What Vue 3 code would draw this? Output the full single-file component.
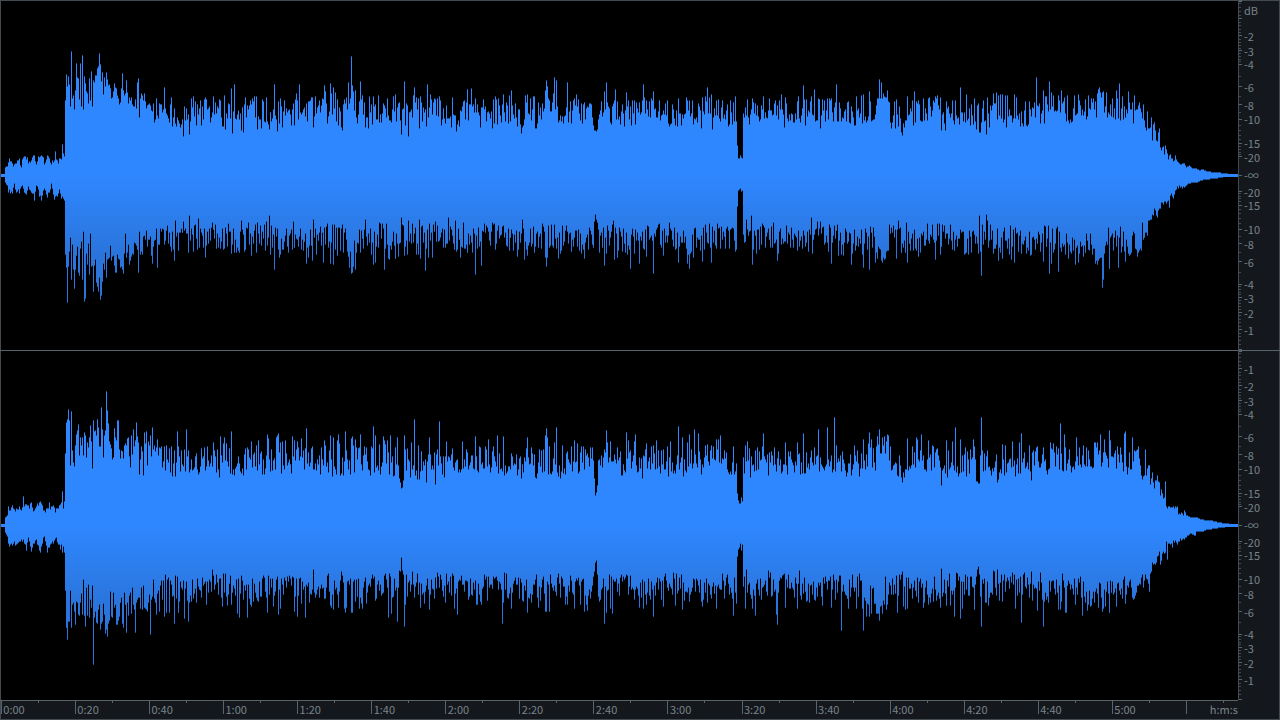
<script setup>
const COLS = 1238
const MID = 175

const LEFT_UP = `1 1 4 1 5 8 7 9 8 13 9 17 11 14 13 9 15 12 17 15 19 17 21 8 22 16 25 19 27 18 28 12 32 18 34 20 36 11 38 19 41 20 43 18 44 11 47 20 49 17 51 11 52 15 54 15 55 24 56 16 58 12 59 17 61 16 62 31 63 22 64 19 65 75 66 101 67 89 68 99 69 91 70 69 71 124 72 77 73 80 74 66 75 85 76 112 77 98 78 97 79 76 80 112 81 69 82 120 83 66 84 99 85 92 86 84 87 82 88 72 89 97 90 75 91 104 92 69 93 95 94 93 95 100 96 100 97 107 98 109 99 122 100 111 101 94 102 103 103 81 104 98 105 89 106 103 107 96 108 90 109 91 110 87 111 77 113 84 114 92 116 87 118 77 119 71 120 73 122 102 123 85 124 80 125 82 126 95 127 83 128 72 129 78 131 78 132 71 134 69 135 76 136 67 137 93 138 97 139 58 140 77 141 82 143 75 144 82 145 74 146 67 149 72 151 65 153 72 154 53 158 57 161 71 164 88 165 67 166 62 167 60 168 57 170 71 171 78 172 49 175 52 180 48 183 39 186 67 189 41 191 77 192 68 196 50 197 71 201 50 207 66 209 69 213 79 219 76 220 75 224 80 225 46 231 87 232 42 234 91 241 45 243 43 245 78 252 77 256 79 257 46 261 47 263 74 269 46 274 91 277 44 280 77 284 75 296 82 299 91 306 72 310 75 313 48 318 70 321 70 324 90 325 84 327 52 330 92 331 82 333 88 335 83 337 76 341 48 342 45 344 76 346 78 348 93 350 77 351 119 352 90 353 84 355 85 356 58 360 94 362 80 365 48 368 47 369 79 372 51 373 79 375 71 378 80 387 77 393 79 395 81 400 55 401 41 404 94 406 72 408 39 413 80 414 88 416 78 418 77 419 47 420 79 426 49 427 91 430 81 439 79 440 75 445 52 452 78 456 44 467 86 471 87 475 77 480 48 481 68 492 47 493 76 495 79 498 77 503 81 509 80 511 85 520 51 521 42 522 48 523 50 525 80 527 81 535 47 536 47 537 52 542 72 545 85 546 95 547 89 553 82 554 98 555 66 556 95 567 93 570 74 574 77 576 81 593 50 594 45 595 45 596 44 597 46 604 84 606 93 614 75 615 86 626 83 634 75 639 73 643 91 644 78 646 75 653 84 667 75 669 49 678 77 686 78 687 75 689 75 701 47 707 88 711 81 712 46 716 75 718 76 730 75 735 79 737 30 738 17 739 17 740 20 741 18 742 17 743 62 747 76 752 77 774 72 781 81 784 48 785 78 798 79 803 90 805 50 814 86 818 77 820 47 822 76 827 77 830 75 836 91 856 79 861 80 863 81 869 84 877 77 878 77 879 96 880 77 881 93 882 77 883 82 884 79 885 78 886 78 887 85 888 74 891 47 894 74 895 47 896 76 901 43 902 40 904 48 907 79 912 75 914 84 918 75 928 77 937 80 941 45 945 45 946 74 955 75 960 88 966 81 974 77 976 46 979 43 980 43 986 41 989 48 993 82 996 83 998 80 1000 81 1002 81 1005 80 1006 48 1007 80 1014 81 1016 78 1029 74 1036 98 1039 72 1040 52 1043 85 1044 52 1046 79 1049 94 1061 85 1067 80 1069 52 1074 80 1078 81 1088 80 1093 77 1097 82 1098 86 1099 88 1102 83 1103 84 1115 56 1116 85 1117 77 1119 92 1122 79 1128 84 1130 66 1134 80 1136 66 1138 70 1139 73 1140 67 1142 57 1143 71 1144 55 1146 45 1147 64 1148 47 1150 48 1151 58 1152 35 1153 51 1154 53 1156 35 1157 34 1158 43 1159 47 1160 28 1161 25 1163 29 1164 21 1165 30 1168 16 1170 21 1172 17 1174 15 1175 20 1178 13 1180 11 1184 12 1186 8 1189 10 1192 7 1196 7 1199 5 1202 6 1206 4 1215 3 1225 2 1230 1`

const LEFT_DOWN = `1 1 4 1 5 8 7 11 8 18 9 15 10 19 12 19 14 9 16 18 18 15 19 19 21 12 23 14 26 20 28 12 31 18 33 19 34 26 36 11 39 22 41 26 44 14 46 20 47 23 49 18 51 9 54 25 55 22 57 22 59 15 61 24 64 26 65 80 66 93 67 128 68 92 69 77 70 63 71 105 72 70 73 95 74 114 75 95 76 81 77 72 78 98 79 101 80 74 81 67 82 105 83 57 84 127 85 124 86 79 87 90 88 69 89 100 90 59 91 92 92 91 93 117 94 91 95 85 96 108 97 112 98 117 99 103 100 125 101 121 102 107 103 89 104 95 105 78 106 103 107 85 109 83 110 71 111 86 113 81 115 98 116 98 117 80 119 85 120 93 122 95 123 99 124 79 125 59 126 83 128 70 129 90 131 82 133 80 134 68 136 71 137 75 138 98 139 57 140 80 142 80 143 62 145 65 146 56 147 72 148 65 150 62 151 81 152 89 154 66 157 93 160 54 165 66 167 51 171 77 172 57 174 86 175 46 178 76 182 58 183 47 188 78 189 41 195 50 198 44 199 73 205 83 212 48 219 63 224 74 228 49 236 78 239 78 241 46 245 75 248 48 251 81 256 78 257 48 265 76 266 47 269 41 270 80 274 95 278 75 279 83 280 80 283 75 293 47 294 73 306 89 308 83 312 86 313 45 316 80 323 88 330 89 333 90 334 50 337 81 340 76 342 50 347 77 348 82 349 93 350 77 351 99 352 98 353 92 354 66 355 95 360 78 365 45 371 80 373 90 375 88 384 95 388 84 389 85 395 84 398 82 401 43 402 50 403 51 404 81 407 80 408 46 412 49 416 80 418 80 419 45 420 84 425 96 428 83 432 83 435 47 443 73 448 43 455 46 457 75 460 83 463 48 472 78 475 100 481 91 492 48 495 75 509 76 517 82 522 45 524 85 527 81 534 78 545 83 546 92 547 83 558 84 560 79 566 51 571 77 584 84 593 73 594 47 595 40 596 45 597 48 598 55 599 78 604 91 606 79 613 46 614 85 617 83 630 94 639 89 640 62 643 74 646 82 653 99 663 81 669 48 675 75 678 88 686 74 687 89 688 80 689 94 690 79 691 77 693 83 700 76 702 87 711 88 717 49 720 74 736 75 737 32 738 16 739 15 740 14 741 17 742 16 743 60 746 45 751 41 752 90 756 79 762 49 765 73 777 86 778 79 790 73 811 43 812 79 817 47 820 47 828 77 831 89 838 81 841 80 843 81 851 90 862 80 863 93 869 95 875 88 876 78 877 84 878 72 879 74 880 75 881 86 882 88 883 83 884 85 885 84 886 77 887 76 888 76 896 84 898 46 901 78 905 78 906 48 907 88 910 76 918 82 927 49 935 85 940 80 954 76 964 80 965 79 979 41 981 101 982 50 986 40 987 46 993 79 998 86 1000 78 1002 84 1009 80 1011 85 1014 88 1021 79 1030 81 1031 80 1043 87 1049 99 1051 89 1058 97 1065 80 1068 84 1075 90 1078 88 1083 82 1092 80 1095 89 1096 86 1097 90 1098 86 1099 84 1100 83 1101 83 1102 113 1103 105 1104 79 1109 94 1118 93 1120 52 1125 87 1136 75 1137 82 1138 78 1139 76 1141 76 1142 48 1143 65 1145 58 1147 61 1148 46 1151 45 1153 41 1154 34 1157 43 1159 34 1162 28 1166 29 1168 26 1169 33 1170 21 1173 24 1176 15 1180 13 1184 13 1188 9 1192 8 1196 8 1200 6 1205 5 1214 4 1220 3 1225 2 1230 1`

const RIGHT_UP = `1 1 4 1 5 8 7 10 8 19 10 15 12 20 14 16 16 17 19 19 21 15 22 18 23 29 24 19 27 20 29 17 31 23 33 14 35 17 37 22 41 22 44 15 47 17 48 17 49 23 50 16 53 20 55 13 57 17 60 21 61 23 62 34 63 17 64 24 65 72 66 103 67 106 68 116 69 105 70 60 71 114 72 75 73 63 74 59 75 80 76 91 77 95 78 101 79 70 80 88 81 80 82 88 83 70 84 93 85 90 86 68 87 83 88 78 89 88 90 100 91 84 92 57 93 105 94 94 95 95 96 90 97 106 98 98 99 79 100 79 101 118 102 96 103 68 104 90 105 95 106 134 107 115 108 102 109 84 110 81 111 77 112 66 113 68 114 97 115 88 116 85 117 105 118 105 119 76 120 67 121 75 122 74 123 67 124 80 126 80 127 87 128 88 129 69 130 58 131 90 132 71 133 96 134 79 135 85 136 103 137 89 138 83 139 51 141 79 142 74 143 50 144 93 145 82 146 94 147 60 148 84 149 80 150 90 151 69 152 98 153 76 155 74 156 78 157 86 158 70 161 79 164 79 166 80 167 66 169 77 171 79 173 62 177 94 178 79 181 75 184 76 186 96 189 53 198 51 199 53 204 78 207 79 213 83 217 76 220 89 223 82 224 88 226 82 229 77 231 94 232 51 240 54 243 50 247 78 251 84 256 80 258 85 262 51 264 51 267 91 268 87 271 76 276 88 277 90 278 92 280 83 282 84 285 85 292 89 294 85 297 84 301 87 303 75 306 97 311 77 312 79 313 56 320 51 321 78 324 85 325 80 328 53 330 90 333 88 337 85 338 91 339 82 341 52 343 50 345 94 351 87 352 89 353 80 355 86 360 91 370 50 371 79 373 99 375 90 379 81 383 89 384 85 385 81 387 85 390 90 395 78 397 88 399 47 400 43 401 37 402 38 403 45 404 90 405 76 410 48 411 83 414 106 415 50 417 46 418 80 419 46 421 74 426 43 429 88 435 41 439 104 444 48 446 84 452 77 462 84 475 89 478 53 488 86 493 79 497 90 498 52 503 89 521 47 527 88 535 48 536 47 537 52 545 90 546 97 547 88 549 79 550 52 554 83 556 98 560 47 562 80 571 79 574 85 577 82 581 79 585 76 594 47 595 30 596 33 597 40 598 65 604 76 606 95 607 83 610 84 617 78 626 93 628 85 634 84 635 91 642 47 646 82 653 80 656 85 667 79 670 84 673 52 678 99 682 88 687 83 689 91 694 96 698 92 701 51 705 80 707 81 711 80 716 86 718 86 720 90 733 79 737 32 738 25 739 22 740 22 741 28 742 24 743 68 745 80 747 84 750 48 763 92 768 50 774 78 785 83 797 83 802 52 803 92 818 96 827 98 834 108 836 80 854 80 859 49 863 86 868 82 869 93 871 86 876 79 877 89 878 81 879 96 880 72 881 72 882 88 883 80 884 89 885 72 886 84 887 91 888 90 890 79 901 48 902 43 904 48 907 87 912 79 916 88 917 86 921 91 928 85 932 80 941 40 946 85 947 48 952 84 955 98 960 86 965 78 973 86 974 79 976 44 977 44 978 42 979 42 981 108 990 55 991 50 997 43 998 46 999 53 1002 81 1005 80 1012 84 1019 83 1020 52 1021 92 1029 80 1031 45 1036 78 1043 78 1047 51 1050 83 1056 79 1060 102 1062 55 1064 91 1065 78 1076 88 1079 78 1094 83 1095 83 1096 78 1097 83 1100 91 1104 86 1109 95 1110 85 1117 79 1124 92 1125 94 1127 51 1132 88 1134 75 1138 79 1140 60 1141 50 1142 46 1144 50 1145 76 1146 50 1147 57 1149 60 1150 41 1152 53 1154 37 1155 45 1157 50 1159 43 1160 30 1161 36 1163 27 1164 28 1165 44 1166 19 1170 18 1174 17 1177 19 1178 11 1181 13 1183 10 1184 15 1186 10 1190 8 1196 8 1200 6 1206 5 1210 5 1218 3 1225 2 1232 1`

const RIGHT_DOWN = `1 1 4 1 5 8 7 12 8 19 9 22 12 21 14 17 15 21 18 18 21 15 24 19 26 26 28 13 31 27 33 19 36 15 39 26 40 28 43 13 45 17 47 28 50 20 53 19 55 14 58 20 60 25 61 20 62 28 63 22 64 28 65 66 66 103 67 115 68 97 69 97 70 66 71 103 72 80 73 78 74 87 75 100 76 77 77 78 78 90 79 91 80 78 81 69 82 90 83 55 84 91 85 102 86 63 87 91 88 60 89 93 90 75 91 83 92 61 93 140 94 93 95 87 96 98 97 99 98 85 99 80 100 105 101 99 102 97 103 79 104 90 105 109 106 105 107 112 108 99 109 96 110 67 111 92 112 93 113 68 114 83 115 80 116 100 117 100 118 96 119 92 120 78 121 73 122 99 123 103 124 68 125 80 126 108 127 78 128 91 129 71 130 68 131 89 132 63 133 80 134 85 135 108 136 78 139 73 140 84 141 63 142 85 143 61 144 83 146 85 147 87 148 78 149 70 150 110 151 75 152 72 155 78 156 90 158 66 159 87 160 61 164 92 166 88 168 53 169 88 174 99 178 88 180 57 184 94 188 97 197 54 202 53 206 80 212 45 216 50 222 82 227 81 231 80 237 89 239 93 241 51 247 93 251 82 264 53 267 88 273 82 278 90 280 84 284 53 294 87 297 92 300 53 305 93 313 45 319 73 327 51 330 81 331 83 333 85 338 83 341 47 344 84 345 88 346 83 351 88 352 88 359 84 362 84 365 53 372 50 388 93 391 89 397 97 399 46 400 47 401 33 402 46 403 50 404 102 405 80 406 50 412 47 417 49 420 83 429 85 435 53 437 48 438 52 440 50 445 78 453 51 454 84 457 90 476 80 481 80 484 50 502 99 503 78 511 84 527 88 536 50 538 83 545 87 546 87 549 87 550 50 565 80 567 80 574 84 580 80 584 87 587 86 593 52 594 47 595 38 596 36 597 50 604 99 606 88 610 84 612 89 639 83 643 84 646 80 653 92 663 82 673 48 675 81 682 85 702 82 716 84 733 91 736 79 737 32 738 25 739 23 740 19 741 26 742 20 743 62 745 84 746 45 752 84 755 91 768 46 770 48 776 90 777 100 785 83 797 84 799 46 822 81 831 83 841 106 848 84 856 84 859 49 862 84 863 106 865 76 866 92 867 79 868 80 869 92 871 89 874 79 876 89 877 89 878 89 879 96 880 82 881 81 882 89 883 76 884 80 886 85 887 80 897 88 902 47 903 82 905 85 906 53 907 84 923 83 934 52 940 83 941 44 946 81 950 81 954 92 960 94 962 84 974 85 976 52 977 45 978 42 979 50 981 102 988 81 993 46 994 47 997 45 1001 50 1002 77 1015 84 1021 98 1024 48 1031 47 1032 76 1037 86 1040 48 1043 102 1058 85 1060 85 1062 49 1065 88 1066 88 1075 80 1080 52 1082 91 1087 86 1102 87 1103 84 1109 88 1116 82 1125 79 1133 75 1138 61 1140 60 1142 50 1143 63 1145 50 1147 55 1149 67 1150 49 1151 47 1152 38 1155 40 1157 32 1159 27 1160 40 1163 27 1165 28 1166 17 1167 35 1168 19 1172 23 1173 16 1177 20 1180 14 1185 13 1190 9 1195 11 1196 7 1202 7 1207 5 1215 4 1220 3 1228 2`

function levels(text, seed) {
  const n = text.split(' ').map(Number)
  const out = new Array(COLS).fill(1)
  let state = seed
  const random = () => {
    state = (state * 1664525 + 1013904223) % 4294967296
    return state / 4294967296
  }
  for (let i = 0; i < n.length; i += 2) {
    const [x0, a0, x1 = COLS, a1 = 1] = n.slice(i, i + 4)
    out[x0] = a0
    for (let x = x0 + 1; x < x1; x++) {
      const steady = x0 >= 150 && x1 < 1138
      const t = (x - x0) / (x1 - x0)
      const line = a0 + (a1 - a0) * t
      const drift = 3 * Math.sin(x / 9 + seed) + (x > 1050 || x < 165 ? 4 : 0)
      const jitter = line > 12 ? 5 * random() - 3 : 0
      out[x] = Math.round(steady ? 51 + drift + 26 * random() ** 1.2 : line + jitter)
    }
  }
  return out
}

function outline(up, down, inset) {
  let d = `M1 ${MID}`
  for (let x = 1; x < COLS; x++) d += `V${MID - Math.max(1, up[x] - inset)}H${x + 1}`
  for (let x = COLS - 1; x > 0; x--) d += `V${MID + Math.max(2, down[x] - inset)}H${x}`
  return d + 'Z'
}

const channels = [
  { name: 'Left channel', up: levels(LEFT_UP, 11), down: levels(LEFT_DOWN, 57) },
  { name: 'Right channel', up: levels(RIGHT_UP, 93), down: levels(RIGHT_DOWN, 131) },
].map((c) => ({ name: c.name, body: outline(c.up, c.down, 1), tips: outline(c.up, c.down, 0) }))

const pct = (v) => `${v}%`
const place = (db, side) => 49.8 + side * 49.8 * 10 ** (db / 20)
const major = [-1, -2, -3, -4, -6, -8, -10, -15, -20]

function scale(first) {
  const labels = [{ text: '-∞', y: pct(50) }]
  const small = []
  for (const side of [-1, 1]) {
    for (const db of major) {
      labels.push({ text: first && side < 0 && db === -1 ? '' : String(db), y: pct(place(db, side)) })
    }
    for (let i = 1; i < 20; i++) small.push(pct(place(-i / 5, side)))
    for (let db = -5; db > -20; db--) small.push(pct(place(db, side)))
  }
  return { labels, small }
}
const scales = [scale(true), scale(false)]

const STEP = (74.07 / 1238) * 100
const START = (1.3 / 1238) * 100
const times = Array.from({ length: 17 }, (_, i) => ({
  x: pct(START + i * STEP),
  half: pct(START + (i + 0.5) * STEP),
  text: i < 16 ? `${Math.floor(i / 3)}:${String((i % 3) * 20).padStart(2, '0')}` : '',
}))
</script>

<template>
  <main class="editor">
    <section class="waves">
      <svg
        v-for="(c, i) in channels"
        :key="c.name"
        class="wave"
        viewBox="0 0 1238 350"
        preserveAspectRatio="none"
        role="img"
        :aria-label="c.name"
      >
        <defs>
          <linearGradient :id="`fill${i}`" gradientUnits="userSpaceOnUse" x1="0" y1="0" x2="0" y2="350">
            <stop offset="0.5" stop-color="#2f87ff" />
            <stop offset="0.72" stop-color="#2a75dd" />
            <stop offset="1" stop-color="#2a70d4" />
          </linearGradient>
        </defs>
        <path class="tips" :d="c.tips" />
        <path :d="c.body" :fill="`url(#fill${i})`" />
      </svg>
    </section>

    <aside class="levels">
      <svg v-for="(s, i) in scales" :key="i" class="scale">
        <line v-for="(y, k) in s.small" :key="k" x1="0" x2="2" :y1="y" :y2="y" class="faint" />
        <g v-for="(l, k) in s.labels" :key="`l${k}`">
          <line x1="0" x2="3" :y1="l.y" :y2="l.y" />
          <text x="5" :y="l.y" dy="5">{{ l.text }}</text>
        </g>
        <text v-if="i === 0" x="5" y="15">dB</text>
        <line x1="0" x2="3" y1="0" y2="0" class="edge" />
        <line x1="0" x2="3" y1="100%" y2="100%" class="edge" />
      </svg>
    </aside>

    <footer class="timeline">
      <svg class="times">
        <g v-for="t in times" :key="t.x">
          <line :x1="t.x" :x2="t.x" y1="0" y2="13" />
          <line :x1="t.half" :x2="t.half" y1="0" y2="2" />
          <text :x="t.x" dx="2" y="13">{{ t.text }}</text>
        </g>
        <text x="100%" y="13" text-anchor="end">h:m:s</text>
      </svg>
    </footer>
    <div class="corner"></div>
  </main>
</template>

<style>
body {
  background: #14181c;
}
</style>

<style scoped>
.editor {
  box-sizing: border-box;
  display: grid;
  grid-template-columns: minmax(0, 1fr) 42px;
  grid-template-rows: minmax(0, 1fr) 20px;
  height: 100vh;
  background: #14181c;
  font-family: "Noto Sans CJK SC", "Noto Sans", sans-serif;
  font-size: 11px;
  box-shadow: inset 0 0 0 1px #434a50;
}
.waves {
  display: grid;
  grid-template-rows: 1fr 1fr;
  min-height: 0;
  background: #000;
  box-shadow: inset 1px 1px 0 #434a50;
}
.wave {
  display: block;
  box-sizing: border-box;
  width: 100%;
  height: 100%;
  min-height: 0;
  shape-rendering: crispEdges;
}
.wave + .wave,
.scale + .scale {
  box-shadow: inset 0 1px 0 #59636a;
}
.tips {
  fill: #1b4f96;
}
.levels {
  display: grid;
  grid-template-rows: 1fr 1fr;
  min-height: 0;
  border-left: 1px solid #434a50;
}
.scale,
.times {
  display: block;
  width: 100%;
  height: 100%;
  min-height: 0;
}
line {
  stroke: #59636a;
  stroke-width: 1px;
  shape-rendering: crispEdges;
}
.faint {
  stroke: #434a50;
}
.edge {
  stroke-width: 3px;
}
text {
  fill: #78838b;
}
.timeline {
  min-height: 0;
  border-top: 1px solid #59636a;
}
.corner {
  min-height: 0;
}
</style>
